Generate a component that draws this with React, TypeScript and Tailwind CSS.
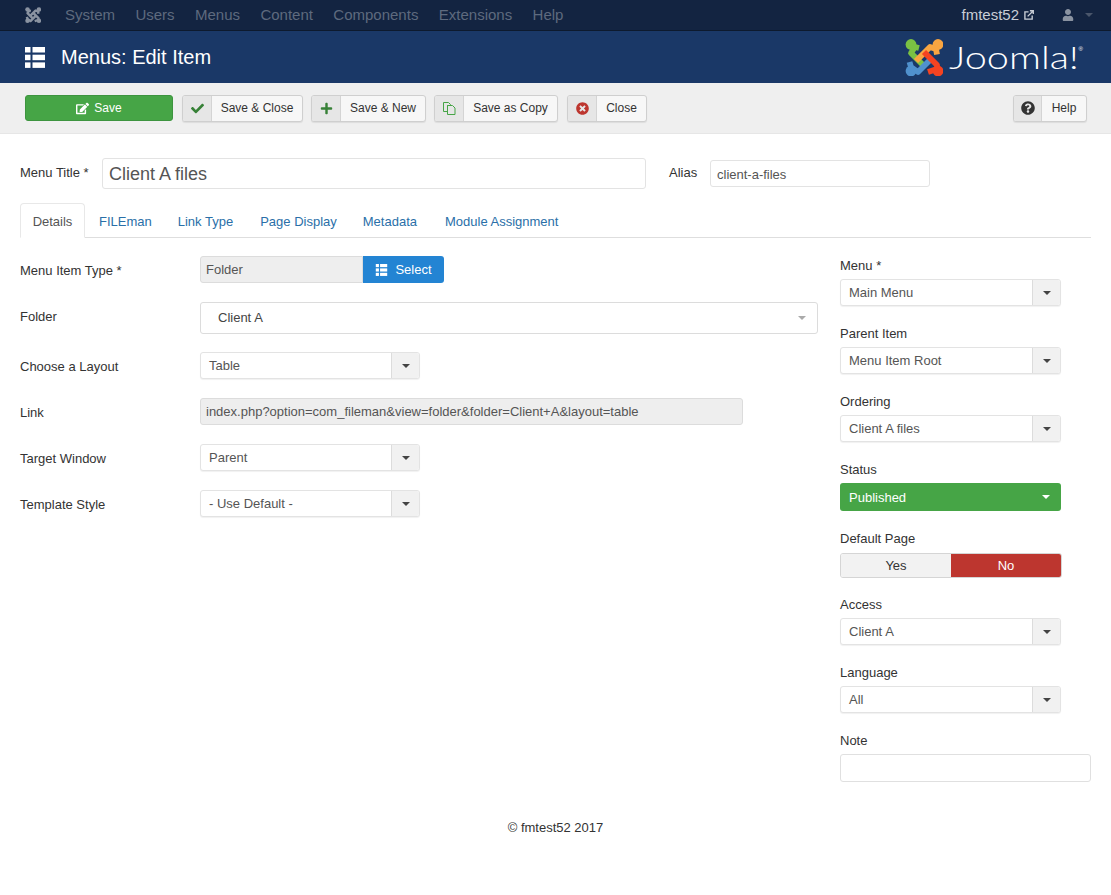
import React from "react";
import { FaCheck, FaPlus, FaTimesCircle, FaQuestionCircle, FaUser, FaEdit } from "react-icons/fa";

function JoomlaMark({ className, colors }: { className: string; colors: [string, string, string, string] }) {
  const [g, o, r, b] = colors;
  const common = { fill: "none", strokeWidth: 5.8, strokeLinejoin: "round" as const };
  return (
    <svg viewBox="5 4 38 37" className={className}>
      <circle cx="11" cy="9.5" r="5.4" fill={g} />
      <path d="M19 13 L15 12 L11 18 L24 31" stroke={g} {...common} />
      <circle cx="11" cy="36" r="5.4" fill={b} />
      <path d="M9.5 27 L11 32 L18 37 L31 24" stroke={b} {...common} />
      <circle cx="38" cy="9.5" r="5.4" fill={o} />
      <path d="M37 19.5 L36 14 L30 12 L16 26" stroke={o} {...common} />
      <path d="M24 17 L37 30 L37 34 L28 37" stroke={r} {...common} />
      <circle cx="38" cy="36" r="5.4" fill={r} />
    </svg>
  );
}

function ListIcon({ className }: { className: string }) {
  return (
    <svg viewBox="0 0 20 21" className={className} fill="currentColor">
      <rect x="0" y="0" width="5.5" height="5.5" />
      <rect x="7.5" y="0" width="12.5" height="5.5" />
      <rect x="0" y="7.7" width="5.5" height="5.5" />
      <rect x="7.5" y="7.7" width="12.5" height="5.5" />
      <rect x="0" y="15.4" width="5.5" height="5.5" />
      <rect x="7.5" y="15.4" width="12.5" height="5.5" />
    </svg>
  );
}

function Caret({ className }: { className: string }) {
  return <span className={`h-0 w-0 border-x-[4px] border-t-[4px] border-x-transparent ${className}`} />;
}

function ToolButton({ icon, label, w, iconW = "w-[29px]" }: { icon: React.ReactNode; label: string; w: string; iconW?: string }) {
  return (
    <div className={`flex h-[27px] ${w} overflow-hidden rounded-[3px] border border-[#cfcfcf] bg-[#f7f7f7] text-[12px] text-[#333] shadow-[0_1px_1px_rgba(0,0,0,0.08)]`}>
      <span className={`flex ${iconW} shrink-0 items-center justify-center border-r border-[#d4d4d4] bg-[#e6e6e6]`}>{icon}</span>
      <span className="flex flex-1 items-center justify-center">{label}</span>
    </div>
  );
}

function SelectBox({ value, w = "w-[220px]", textClass = "" }: { value: string; w?: string; textClass?: string }) {
  return (
    <div className={`flex h-[27px] ${w} overflow-hidden rounded-[3px] border border-[#e3e3e3] bg-white text-[13px] text-[#555] shadow-[0_1px_1px_rgba(0,0,0,0.06)]`}>
      <span className={`flex flex-1 items-center pl-[8px] ${textClass}`}>{value}</span>
      <span className="flex w-[28px] items-center justify-center border-l border-[#dcdcdc] bg-[#f1f1f1]">
        <Caret className="border-t-[#444]" />
      </span>
    </div>
  );
}

function Row({ label, children, className, labelClass = "pt-[2px]" }: { label: string; children: React.ReactNode; className: string; labelClass?: string }) {
  return (
    <div className={`flex items-center ${className}`}>
      <label className={`w-[180px] text-[13px] text-[#333] ${labelClass}`}>{label}</label>
      {children}
    </div>
  );
}

function Side({ label, children, className, gap = "mb-[4px]" }: { label: string; children: React.ReactNode; className: string; gap?: string }) {
  return (
    <div className={className}>
      <div className={`h-[18px] text-[13px] leading-[18px] text-[#333] ${gap}`}>{label}</div>
      {children}
    </div>
  );
}

export default function App() {
  return (
    <div className="min-h-[895px] bg-white font-['Liberation_Sans',Arial,sans-serif] text-[13px] text-[#333]">
      <nav className="flex h-[31px] items-center border-b border-[#0d1a2e] bg-[#132441] pl-[25px] pr-[18px] text-[15px] text-[#5e6a7e]">
        <JoomlaMark className="mr-[24px] h-[16px] w-[16px]" colors={["#8a93a1", "#8a93a1", "#8a93a1", "#8a93a1"]} />
        <div className="flex gap-[20.4px] pt-[1px]">
          <span>System</span>
          <span>Users</span>
          <span>Menus</span>
          <span>Content</span>
          <span>Components</span>
          <span>Extensions</span>
          <span>Help</span>
        </div>
        <div className="ml-auto flex items-center text-[#c9ced6]">
          <span className="pt-[1px]">fmtest52</span>
          <svg viewBox="0 0 11 11" className="ml-[5px] h-[10px] w-[10px]" fill="none" stroke="currentColor" strokeWidth="1.5">
            <path d="M5 2 H1 V10 H9 V6" />
            <path d="M4 7 L10 1 M6.5 0.8 H10.2 V4.5" />
          </svg>
          <FaUser size={12} className="ml-[28px] text-[#8a93a1]" />
          <Caret className="ml-[11px] border-t-[#4a566b]" />
        </div>
      </nav>

      <header className="flex h-[52px] items-center bg-[#1a3867] pl-[25px] pr-[28px] text-white">
        <ListIcon className="h-[21px] w-[20px]" />
        <h1 className="ml-[16px] text-[20px] font-normal">Menus: Edit Item</h1>
        <div className="ml-auto flex items-center">
          <JoomlaMark className="h-[37px] w-[38px]" colors={["#7ac143", "#f9a541", "#f44321", "#5091cd"]} />
          <span className="ml-[6px] inline-block w-[130px] origin-left scale-x-[1.28] font-['Lato',sans-serif] text-[31px] font-light leading-none whitespace-nowrap">Joomla!</span>
          <span className="mb-[16px] text-[6px] leading-none">®</span>
        </div>
      </header>

      <div className="flex h-[51px] items-center border-b border-[#e6e6e6] bg-[#efefef] pl-[25px] pr-[24px]">
        <div className="mr-[9px] flex h-[26px] w-[148px] items-center justify-center gap-[5px] rounded-[3px] border border-[#3d943f] bg-[#46a546] text-[12px] text-white">
          <FaEdit size={13} />
          <span>Save</span>
        </div>
        <ToolButton w="w-[121px] mr-[8px]" label="Save & Close" icon={<FaCheck size={13} className="text-[#378137]" />} />
        <ToolButton w="w-[115px] mr-[8px]" label="Save & New" icon={<FaPlus size={13} className="text-[#378137]" />} />
        <ToolButton
          w="w-[124px] mr-[9px]"
          label="Save as Copy"
          icon={
            <svg viewBox="0 0 13 13" className="h-[13px] w-[13px]" fill="none" stroke="#46a546" strokeWidth="1">
              <path d="M0.5 0.5 H5.5 L7.5 2.5 V3.5 H4.5 V9.5 H0.5 Z" />
              <path d="M4.5 3.5 H9.5 L12 6 V12.5 H4.5 Z" />
            </svg>
          }
        />
        <ToolButton w="w-[80px]" label="Close" icon={<FaTimesCircle size={13} className="text-[#bd362f]" />} />
        <div className="ml-auto">
          <ToolButton w="w-[74px]" label="Help" iconW="w-[28px]" icon={<FaQuestionCircle size={14} className="text-[#333]" />} />
        </div>
      </div>

      <main className="px-[20px] pt-[24px]">
        <div className="flex items-center">
          <label className="w-[82px] pb-[2px]">Menu Title *</label>
          <div className="flex h-[31px] w-[544px] items-center rounded-[3px] border border-[#e3e3e3] pl-[6px] pt-[1px] text-[18px] text-[#555]">Client A files</div>
          <label className="ml-[23px] w-[41px] pb-[2px]">Alias</label>
          <div className="flex h-[27px] w-[220px] items-center rounded-[3px] border border-[#e3e3e3] pl-[6px] pt-[2px] text-[#555]">client-a-files</div>
        </div>

        <div className="mt-[14px] flex h-[35px] items-stretch border-b border-[#dedede] pt-[3px] text-[#2a6fa8]">
          <span className="-mt-[3px] flex h-[35px] w-[65px] items-center justify-center rounded-t-[4px] border border-[#e8e8e8] border-b-white bg-white pt-[2px] text-[#555]">Details</span>
          <span className="ml-[14px] flex items-center">FILEman</span>
          <span className="ml-[26px] flex items-center">Link Type</span>
          <span className="ml-[27px] flex items-center">Page Display</span>
          <span className="ml-[26px] flex items-center">Metadata</span>
          <span className="ml-[28px] flex items-center">Module Assignment</span>
        </div>

        <div className="flex">
          <div className="w-[798px] pt-[18px]">
            <Row label="Menu Item Type *" className="h-[27px]">
              <div className="flex h-[27px] w-[163px] items-center rounded-l-[3px] border border-[#dcdcdc] bg-[#eeeeee] pl-[5px] text-[#555]">Folder</div>
              <div className="flex h-[27px] w-[81px] items-center justify-center gap-[7px] rounded-r-[3px] bg-[#2384d3] text-white">
                <ListIcon className="h-[12px] w-[13px]" />
                <span>Select</span>
              </div>
            </Row>
            <Row label="Folder" className="mt-[19px] h-[32px]" labelClass="pb-[2px]">
              <div className="flex h-[32px] w-[618px] items-center rounded-[3px] border border-[#dcdcdc] bg-white pl-[17px] pr-[11px] text-[#444]">
                <span>Client A</span>
                <Caret className="ml-auto border-x-[3.5px] border-t-[3.5px] border-t-[#aaa]" />
              </div>
            </Row>
            <Row label="Choose a Layout" className="mt-[18px] h-[27px]">
              <SelectBox value="Table" />
            </Row>
            <Row label="Link" className="mt-[19px] h-[27px]">
              <div className="flex h-[27px] w-[543px] items-center rounded-[3px] border border-[#dcdcdc] bg-[#eeeeee] pl-[5px] text-[#555]">index.php?option=com_fileman&amp;view=folder&amp;folder=Client+A&amp;layout=table</div>
            </Row>
            <Row label="Target Window" className="mt-[19px] h-[27px]">
              <SelectBox value="Parent" />
            </Row>
            <Row label="Template Style" className="mt-[19px] h-[27px]">
              <SelectBox value="- Use Default -" />
            </Row>
          </div>

          <aside className="ml-[22px] w-[251px] pt-[18px]">
            <Side label="Menu *" className="mt-[1px]"><SelectBox value="Main Menu" w="w-[221px]" /></Side>
            <Side label="Parent Item" className="mt-[19px]"><SelectBox value="Menu Item Root" w="w-[221px]" textClass="pt-[1px]" /></Side>
            <Side label="Ordering" className="mt-[19px]"><SelectBox value="Client A files" w="w-[221px]" textClass="pt-[1px]" /></Side>
            <Side label="Status" className="mt-[19px]">
              <div className="flex h-[28px] w-[221px] items-center justify-between rounded-[3px] bg-[#46a546] pl-[9px] pr-[11px] text-white">
                <span className="pt-[1px]">Published</span>
                <Caret className="border-t-white" />
              </div>
            </Side>
            <Side label="Default Page" className="mt-[19px]" gap="mb-[5px]">
              <div className="flex h-[25px] w-[222px] overflow-hidden rounded-[3px] border border-[#d5d5d5]">
                <span className="flex w-[110px] items-center justify-center bg-[#f2f2f2] text-[#333]">Yes</span>
                <span className="flex flex-1 items-center justify-center bg-[#bd362f] text-white">No</span>
              </div>
            </Side>
            <Side label="Access" className="mt-[18px]"><SelectBox value="Client A" w="w-[221px]" /></Side>
            <Side label="Language" className="mt-[19px]"><SelectBox value="All" w="w-[221px]" /></Side>
            <Side label="Note" className="mt-[19px]">
              <div className="h-[28px] w-[251px] rounded-[3px] border border-[#e0e0e0] bg-white" />
            </Side>
          </aside>
        </div>

        <footer className="mt-[36px] text-center text-[#333]">© fmtest52 2017</footer>
      </main>
    </div>
  );
}
